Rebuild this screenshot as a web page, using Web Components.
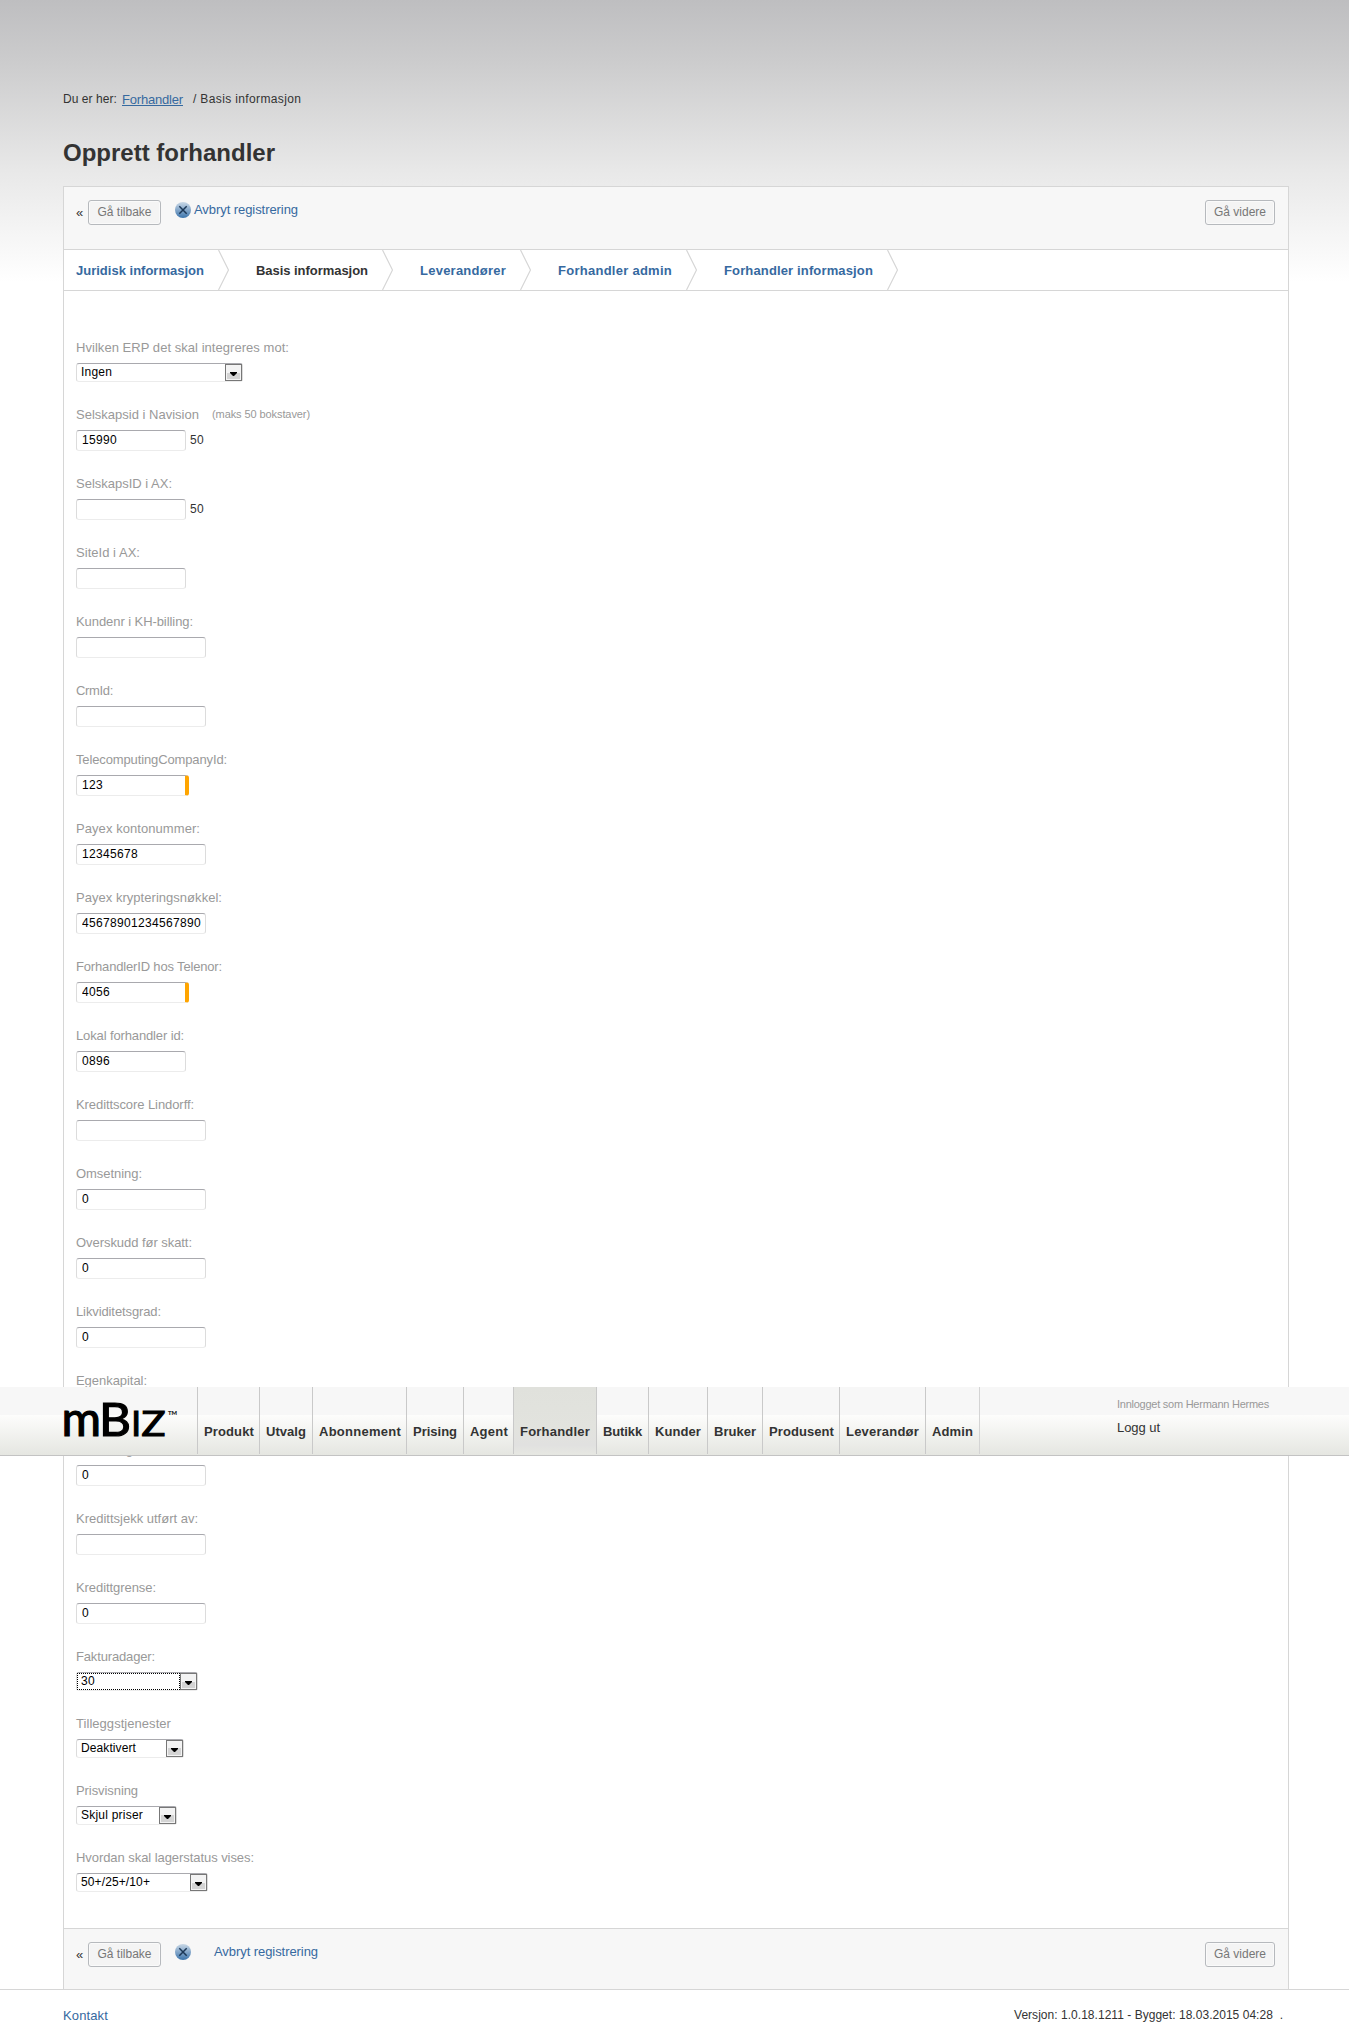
<!DOCTYPE html>
<html lang="no">
<head>
<meta charset="utf-8">
<title>Opprett forhandler</title>
<style>
body{margin:0;height:2040px;overflow:hidden;position:relative;background:#fff linear-gradient(#bebec0 0,#cccccd 62px,#e8e8e8 170px,#fff 282px) no-repeat;background-size:100% 282px;font-family:"Liberation Sans",Arial,sans-serif;font-size:13px;line-height:16px;color:#333}
</style>
</head>
<body>
<dealer-page></dealer-page>
<script>
const define = (name, markup, setup) => {
  const tpl = document.createElement('template');
  tpl.innerHTML = markup;
  customElements.define(name, class extends HTMLElement {
    connectedCallback() {
      if (this.shadowRoot) return;
      this.attachShadow({mode: 'open'}).appendChild(tpl.content.cloneNode(true));
      if (setup) setup(this, this.shadowRoot);
    }
  });
};

/* Text tracked to a given advance width. */
define('t-run', `<style>:host{display:inline-block;white-space:pre;flex:none}</style><slot></slot>`, el => {
  const w = +el.getAttribute('w');
  if (w) {
    const now = el.getBoundingClientRect().width;
    el.style.letterSpacing = ((w - now) / el.textContent.length) + 'px';
  }
});

define('crumb-trail', `<style>
:host{display:flex;height:16px;padding:91px 0 0 63px;font-size:12px}
a{color:#36699f;font-size:13px;margin:1px 10px 0 5px}
a t-run{text-decoration:underline}
.s{margin-right:4px}
</style><t-run w="54">Du er her:</t-run><a><t-run w="61">Forhandler</t-run></a><span class="s">/</span><t-run w="101">Basis informasjon</t-run>`);

define('push-button', `<style>
:host{display:flex;box-sizing:border-box;height:25px;border:1px solid #b6b9bd;border-radius:3px;background:#f4f4f4;box-shadow:inset 0 0 0 1px #fafafa;color:#777;font-size:12px;justify-content:center;line-height:23px}
</style><slot></slot>`);

define('cancel-icon', `<style>:host{display:block;width:16px;height:16px}svg{display:block}</style>
<svg width="16" height="16" viewBox="0 0 16 16"><defs><linearGradient id="g" x2="0" y2="1"><stop offset="0" stop-color="#c9d8e6"/><stop offset=".5" stop-color="#84a7ca"/><stop offset="1" stop-color="#3b74ac"/></linearGradient></defs><circle cx="8" cy="8" r="8" fill="url(#g)"/><path d="M4.3 4.3l7.4 7.4M11.7 4.3l-7.4 7.4" stroke="#1c3857" stroke-width="1.5"/></svg>`);

define('action-bar', `<style>
:host{display:flex;box-sizing:border-box;background:#f7f7f7;padding:13px 13px 0 12px;align-items:flex-start}
.q{width:12px;margin-top:5px}
.b{width:73px}.n{width:70px;margin-left:auto}
cancel-icon{margin:2px 3px 0 14px}
:host([wide]) cancel-icon{margin-right:23px}
a{color:#36699f;margin-top:2px}
</style><span class="q">«</span><push-button class="b"><t-run w="54">Gå tilbake</t-run></push-button><cancel-icon></cancel-icon><a><t-run w="104">Avbryt registrering</t-run></a><push-button class="n"><t-run w="52">Gå videre</t-run></push-button>`);

define('wizard-step', `<style>
:host{display:flex;height:40px;color:#36699f;font-weight:bold;margin-right:27px}
:host([current]){color:#333}
.l{margin:13px 14px 0 0}svg{display:block}
</style><span class="l"><slot></slot></span><svg width="11" height="40" viewBox="0 0 11 40"><path d="M.5 0L10.5 20L.5 40" fill="none" stroke="#d6d6d6" stroke-width="1.2"/></svg>`);

define('wizard-steps', `<style>
:host{display:flex;height:40px;padding-left:12px;background:#fff;border-top:1px solid #d6d6d6;border-bottom:1px solid #d6d6d6}
</style>
<wizard-step><t-run w="128">Juridisk informasjon</t-run></wizard-step>
<wizard-step current><t-run w="112">Basis informasjon</t-run></wizard-step>
<wizard-step><t-run w="86">Leverandører</t-run></wizard-step>
<wizard-step><t-run w="114">Forhandler admin</t-run></wizard-step>
<wizard-step><t-run w="149">Forhandler informasjon</t-run></wizard-step>`);

/* Label row above a control; "hint" and "after" are optional slots. */
define('form-row', `<style>
:host{display:block;margin-bottom:25px;color:#999}
.l{display:flex;height:16px;margin-bottom:7px}
.c{display:flex}
::slotted([slot=hint]){font-size:11px;line-height:15px;margin-left:13px}
::slotted([slot=after]){color:#333;font-size:12px;margin:2px 0 0 4px}
</style><div class="l"><slot name="label"></slot><slot name="hint"></slot></div><div class="c"><slot></slot><slot name="after"></slot></div>`);

define('text-box', `<style>
:host{display:flex;box-sizing:border-box;width:130px;height:21px;border:1px solid #dcdcdc;border-top-color:#a9a9ae;border-bottom-color:#ececec;border-radius:3px;background:#fff;color:#000;font-size:12px;line-height:16px;padding:1px 5px 0;overflow:hidden}
:host([short]){width:110px}
:host([required]){width:113px;border-right:4px solid orange}
:host([scrolled]){padding:1px 4px 0;justify-content:flex-end}
.w{display:flex;overflow:hidden;justify-content:inherit}
</style><div class="w"><slot></slot></div>`);

define('drop-box', `<style>
:host{display:flex;box-sizing:border-box;height:19px;border:1px solid #dcdcdc;border-top-color:#a9a9ae;border-bottom-color:#ececec;border-radius:3px;background:#fff;color:#000;font-size:12px;line-height:16px;justify-content:space-between}
.v{padding-left:4px;flex:1;box-sizing:border-box;height:17px}
:host([focused]) .v{outline:1px dotted #000;outline-offset:-1px}
.a{box-sizing:border-box;width:17px;height:17px;border:1px solid #777;background:linear-gradient(#f3f3f3 50%,#d4d4d4 50%);box-shadow:inset 0 0 0 1px #f4f4f4;display:flex;justify-content:center}
svg{margin-top:7px}
</style><span class="v"><slot></slot></span><span class="a"><svg width="7" height="4" viewBox="0 0 7 4"><path d="M0 0h7v1L4 4H3L0 1z" fill="#000"/></svg></span>`);

const fields = [
  ['Hvilken ERP det skal integreres mot:', 213, 'd', 167, 'Ingen', 31],
  ['Selskapsid i Navision', 123, 's', 0, '15990', 35, 1],
  ['SelskapsID i AX:', 96, 's', 0, '', 0, 2],
  ['SiteId i AX:', 64, 's'],
  ['Kundenr i KH-billing:', 117],
  ['CrmId:', 37],
  ['TelecomputingCompanyId:', 151, 'r', 0, '123', 21],
  ['Payex kontonummer:', 124, '', 0, '12345678', 56],
  ['Payex krypteringsnøkkel:', 146, 'x', 0, '45678901234567890', 119],
  ['ForhandlerID hos Telenor:', 146, 'r', 0, '4056', 28],
  ['Lokal forhandler id:', 108, 's', 0, '0896', 28],
  ['Kredittscore Lindorff:', 118],
  ['Omsetning:', 66, '', 0, '0', 7],
  ['Overskudd før skatt:', 116, '', 0, '0', 7],
  ['Likviditetsgrad:', 85, '', 0, '0', 7],
  ['Egenkapital:', 71, '', 0, '0', 7],
  ['Soliditetsgrad:', 78, '', 0, '0', 7],
  ['Kredittsjekk utført av:', 122],
  ['Kredittgrense:', 80, '', 0, '0', 7],
  ['Fakturadager:', 79, 'd', 122, '30', 14],
  ['Tilleggstjenester', 95, 'd', 108, 'Deaktivert', 55],
  ['Prisvisning', 62, 'd', 101, 'Skjul priser', 62],
  ['Hvordan skal lagerstatus vises:', 178, 'd', 132, '50+/25+/10+', 69]
];
define('basis-form', `<style>:host{display:block;height:1588px;padding:49px 0 0 12px;background:#fff}</style>`, (el, root) => {
  const attr = {s: 'short', r: 'required', x: 'scrolled'};
  const html = fields.map(([label, lw, kind, width, value, vw, extra]) => {
    const text = value ? `<t-run w="${vw}">${value}</t-run>` : '';
    const box = kind === 'd'
      ? `<drop-box style="width:${width}px" ${value === '30' ? 'focused' : ''}>${text}</drop-box>`
      : `<text-box ${attr[kind] || ''}>${text}</text-box>`;
    return `<form-row><t-run slot="label" w="${lw}">${label}</t-run>${extra === 1 ? '<t-run slot="hint" w="98">(maks 50 bokstaver)</t-run>' : ''}${box}${extra ? '<t-run slot="after" w="14">50</t-run>' : ''}</form-row>`;
  }).join('');
  root.appendChild(document.createRange().createContextualFragment(html));
});

define('nav-tab', `<style>
:host{display:block;box-sizing:border-box;height:67px;border-left:1px solid #c9c9c9;padding:37px 0 0 6px;font-weight:bold}
:host([active]){background:linear-gradient(#e0e1dc,#e2e3de 40px,#e1e1e0 58px,#e6e7e2)}
</style><slot></slot>`);

define('brand-logo', `<style>:host{display:block;width:134px;height:67px}svg{display:block}text{font-family:Lato,sans-serif;fill:#000;stroke:#000;stroke-width:1.2px}.tm{stroke-width:.2px}</style>
<svg width="134" height="67" viewBox="63 0 134 67"><text y="49" font-size="48" x="61.5" textLength="39.5" lengthAdjust="spacingAndGlyphs">m</text><text y="48.5" font-size="47" x="99" textLength="32" lengthAdjust="spacingAndGlyphs">B</text><text y="48.5" font-size="35" x="131.2" stroke-width="2">I</text><text y="48.5" font-size="35" x="141.5" textLength="24" lengthAdjust="spacingAndGlyphs">Z</text><text class="tm" y="28" font-size="6.5" x="168" textLength="9" lengthAdjust="spacingAndGlyphs">TM</text></svg>`);

const tabs = [['Produkt',62,50],['Utvalg',53,40],['Abonnement',94,82],['Prising',57,44],['Agent',50,38],['Forhandler',83,70],['Butikk',52,39],['Kunder',59,46],['Bruker',55,42],['Produsent',77,65],['Leverandør',86,73],['Admin',54,41]];
define('top-bar', `<style>
:host{display:flex;box-sizing:border-box;height:69px;padding-left:63px;border-bottom:1px solid #c3c3c3;background:linear-gradient(#f7f7f7 28px,#fdfdfc 28px,#e5e6e1 68px)}
nav{display:flex;height:67px;border-right:1px solid #d4d4d4}
.u{margin:9px 0 0 137px;display:flex;flex-direction:column;align-items:flex-start}
.who{font-size:11px;color:#999;margin-bottom:8px}
</style><brand-logo></brand-logo><nav></nav><div class="u"><t-run class="who" w="152">Innlogget som Hermann Hermes</t-run><t-run w="43">Logg ut</t-run></div>`, (el, root) => {
  root.querySelector('nav').innerHTML = tabs.map(([t, w, tw]) => `<nav-tab style="width:${w}px" ${t === 'Forhandler' ? 'active' : ''}><t-run w="${tw}">${t}</t-run></nav-tab>`).join('');
});

define('page-foot', `<style>
:host{display:flex;justify-content:space-between;height:50px;box-sizing:border-box;border-top:1px solid #d6d6d6;padding:18px 66px 0 63px}
a{color:#36699f}.v{font-size:12px;margin-top:-1px}
</style><a><t-run w="45">Kontakt</t-run></a><t-run class="v" w="269">Versjon: 1.0.18.1211 - Bygget: 18.03.2015 04:28  .</t-run>`);

define('dealer-page', `<style>
:host{display:block}
h1{margin:33px 0 0 63px;height:46px;font-size:24px;line-height:26px}
.panel{width:1224px;margin-left:63px;border:1px solid #d6d6d6;border-bottom:0}
.top{height:62px}.end{height:61px;border-top:1px solid #d6d6d6}
top-bar{position:absolute;left:0;right:0;top:1387px}
</style>
<crumb-trail></crumb-trail>
<h1><t-run w="212">Opprett forhandler</t-run></h1>
<div class="panel"><action-bar class="top"></action-bar><wizard-steps></wizard-steps><basis-form></basis-form><action-bar class="end" wide></action-bar></div>
<page-foot></page-foot>
<top-bar></top-bar>`);
</script>
</body>
</html>
